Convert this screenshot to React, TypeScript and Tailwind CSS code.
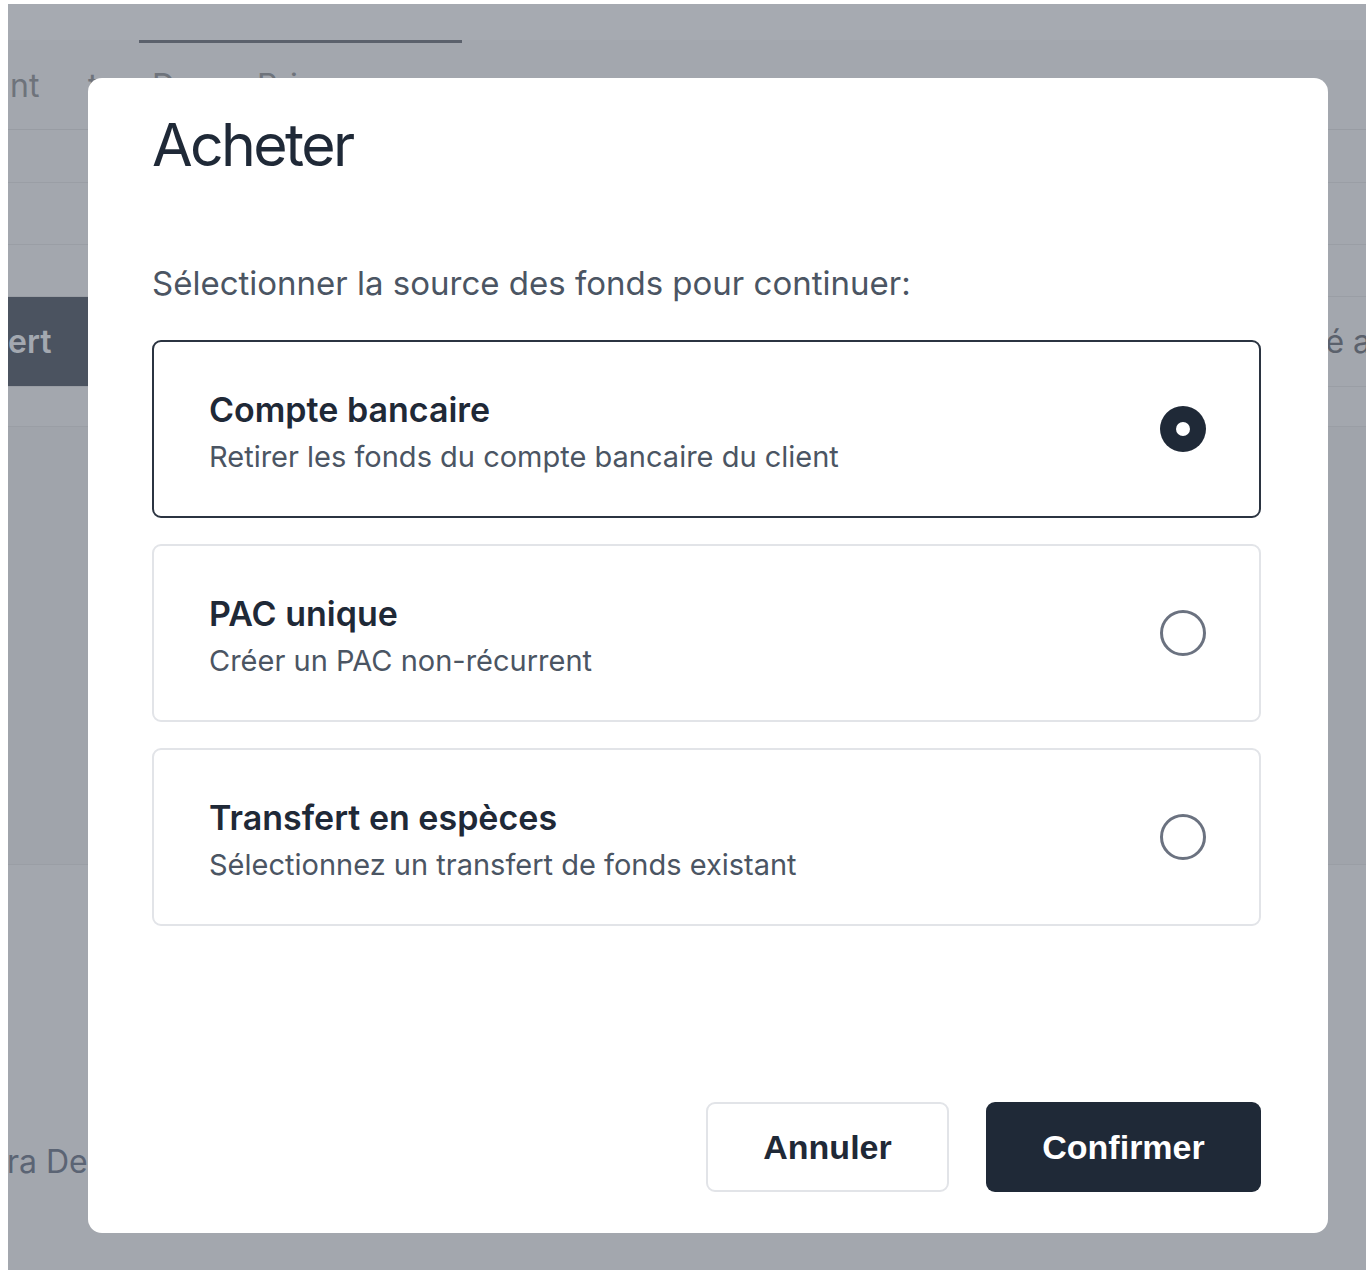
import { useState } from "react";

type Source = { id: string; title: string; desc: string };

const SOURCES: Source[] = [
  { id: "bank", title: "Compte bancaire", desc: "Retirer les fonds du compte bancaire du client" },
  { id: "pac", title: "PAC unique", desc: "Créer un PAC non-récurrent" },
  { id: "cash", title: "Transfert en espèces", desc: "Sélectionnez un transfert de fonds existant" },
];

function Radio({ checked }: { checked: boolean }) {
  if (checked) {
    return (
      <span className="flex h-[46px] w-[46px] shrink-0 items-center justify-center rounded-full bg-[#1f2937]">
        <span className="block h-[14px] w-[14px] rounded-full bg-white" />
      </span>
    );
  }
  return <span className="block h-[46px] w-[46px] shrink-0 rounded-full border-[3px] border-[#6b7280]" />;
}

/* ───────────── page behind the overlay ───────────── */

function Backdrop() {
  return (
    <div className="flex h-full flex-col font-['Inter',sans-serif]">
      <div className="h-[36px] bg-[#a6aab1]" />
      <div className="flex h-[3px]">
        <div className="w-[131px]" />
        <div className="w-[323px] bg-[#5b616c]" />
      </div>
      <div className="flex h-[87px] items-center whitespace-nowrap border-b border-[#989ca3] text-[32px] text-[#6e737b]">
        <span className="w-[80px] pl-[2px]">nt</span>
        <span className="w-[64px]">t</span>
        <span className="w-[105px]">Dons</span>
        <span>Primes</span>
      </div>
      <div className="h-[53px] border-b border-[#9a9ea5]" />
      <div className="h-[62px] border-b border-[#9a9ea5]" />
      <div className="h-[51px]" />
      <div className="flex h-[91px] items-center justify-between border-y border-[#9a9ea5]">
        <div className="flex h-full w-[80px] items-center bg-[#4b5360] text-[32px] font-semibold text-[#a3a8b0]">
          ert
        </div>
        <span className="-mr-[24px] text-[32px] text-[#5b616c]">é au</span>
      </div>
      <div className="h-[40px] border-b border-[#9a9ea5]" />
      <div className="h-[438px] border-b border-[#9a9ea5] bg-[#a0a4ab]" />
      <div className="flex h-[404px] items-start pt-[277px]">
        <span className="-ml-[1px] text-[32px] leading-[40px] text-[#5b6474]">ra De</span>
      </div>
    </div>
  );
}

/* ───────────── modal ───────────── */

function BuyDialog() {
  const [selected, setSelected] = useState("bank");

  return (
    <div className="absolute left-[80px] top-[74px] flex h-[1155px] w-[1240px] flex-col rounded-[14px] bg-white pb-[41px] pl-[64px] pr-[67px] pt-[35px] font-['Inter',sans-serif]">
      <h2 className="text-[59px] font-normal leading-[64px] tracking-[-0.045em] text-[#1f2937]">Acheter</h2>

      <p className="mt-[86px] text-[33px] leading-[40px] text-[#4b5563]">
        Sélectionner la source des fonds pour continuer:
      </p>

      <div className="mt-[37px] flex flex-col gap-[26px]">
        {SOURCES.map((s) => {
          const on = selected === s.id;
          return (
            <button
              key={s.id}
              onClick={() => setSelected(s.id)}
              className={[
                "flex h-[178px] items-center justify-between rounded-[9px] border-2 pl-[55px] pr-[53px] text-left",
                on ? "border-[#2b3441]" : "border-[#e2e4e8]",
              ].join(" ")}
            >
              <div className="flex flex-col pt-[10px]">
                <span className="text-[34px] font-semibold leading-[46px] text-[#1f2937]">{s.title}</span>
                <span className="text-[29px] leading-[48px] text-[#4b5563]">{s.desc}</span>
              </div>
              <Radio checked={on} />
            </button>
          );
        })}
      </div>

      <div className="mt-auto flex justify-end gap-[37px] font-['Liberation_Sans',Arial,sans-serif]">
        <button className="h-[90px] w-[243px] rounded-[9px] border-2 border-[#e2e4e8] bg-white text-[34px] font-bold text-[#1f2937]">
          Annuler
        </button>
        <button className="h-[90px] w-[275px] rounded-[9px] bg-[#1f2937] text-[34px] font-bold text-white">
          Confirmer
        </button>
      </div>
    </div>
  );
}

export default function App() {
  return (
    <div className="min-h-screen bg-white pl-[8px] pt-[4px]">
      <div className="relative h-[1266px] w-[1358px] overflow-hidden bg-[#a3a7ae]">
        <Backdrop />
        <BuyDialog />
      </div>
    </div>
  );
}
